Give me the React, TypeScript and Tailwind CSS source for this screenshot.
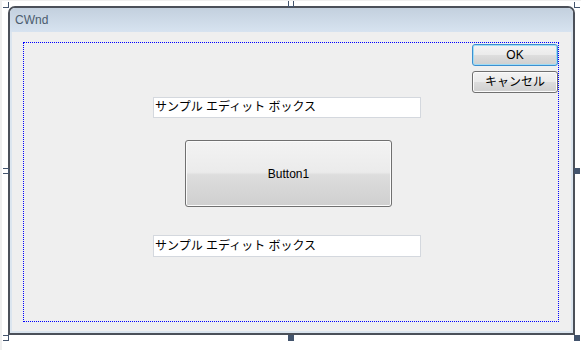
const jp = "font-['Liberation_Sans','Noto_Sans_CJK_JP',sans-serif]"

function Handle({ className }: { className: string }) {
  return <div className={`absolute h-[6px] w-[6px] border-[#43546d] ${className}`} />
}

function WinButton({
  label,
  focused,
  className = '',
}: {
  label: string
  focused?: boolean
  className?: string
}) {
  return (
    <button
      className={`flex items-center justify-center rounded-[3px] border bg-[linear-gradient(#f3f3f3,#ebebeb_48%,#dddddd_52%,#cfcfcf)] text-[12px] text-black ${
        focused
          ? 'border-[#3c8fd0] shadow-[inset_0_0_0_1px_#9fdcf5]'
          : 'border-[#707070] shadow-[inset_0_0_0_1px_#fbfbfb]'
      } ${jp} ${className}`}
    >
      {label}
    </button>
  )
}

function EditBox({ className = '' }: { className?: string }) {
  return (
    <div
      className={`w-[268px] border border-[#d4d8de] bg-white pl-[1px] text-[12px] text-black ${jp} ${className}`}
    >
      サンプル エディット ボックス
    </div>
  )
}

export default function App() {
  return (
    <div className="relative h-[350px] w-[581px] overflow-hidden border-l-2 border-t border-[#efefef] bg-white">
      {/* window */}
      <div className="ml-[6px] mt-[5px] flex h-[329px] w-[567px] flex-col overflow-hidden rounded-t-[7px] border-2 border-[#4b5059]">
        <div className="h-[24px] bg-[linear-gradient(#c3d0de,#d7e3f0)] pl-[5px] font-['Liberation_Sans',sans-serif] text-[12px] leading-[24px] text-[#4b5c6e]">
          CWnd
        </div>
        <div className="flex-1 border-x-2 border-b-2 border-[#dbe5ef] bg-[#efefef]">
          <div className="ml-[11px] mt-[10px] flex h-[280px] w-[536px] border border-dotted border-[#0000ff]">
            <div className="flex flex-col items-start pl-[129px] pt-[54px]">
              <EditBox className="h-[21px] leading-[19px]" />
              <WinButton label="Button1" className="ml-[32px] mt-[22px] h-[67px] w-[207px]" />
              <EditBox className="mt-[28px] h-[22px] leading-[20px]" />
            </div>
            <div className="ml-auto flex flex-col gap-[5px] pt-[1px]">
              <WinButton label="OK" focused className="h-[22px] w-[86px]" />
              <WinButton label="キャンセル" className="h-[22px] w-[86px]" />
            </div>
          </div>
        </div>
      </div>

      {/* selection handles */}
      <Handle className="left-[1px] top-[1px] border-b border-r" />
      <Handle className="left-[286px] top-0 border-x border-b" />
      <Handle className="left-[572px] top-[1px] border-b border-l" />
      <Handle className="left-[1px] top-[167px] border-y border-r" />
      <Handle className="left-[572px] top-[167px] bg-[#43546d]" />
      <Handle className="left-[1px] top-[334px] border-y border-r" />
      <Handle className="left-[286px] top-[334px] bg-[#43546d]" />
      <Handle className="left-[572px] top-[334px] bg-[#43546d]" />
    </div>
  )
}
